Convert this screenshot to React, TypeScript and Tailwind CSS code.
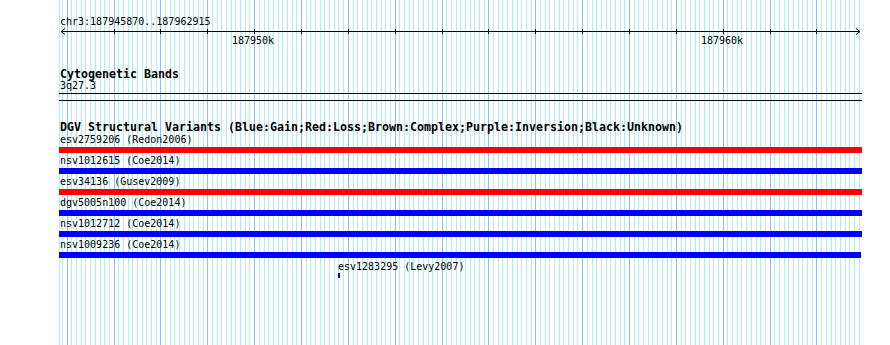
import React from 'react';

// grid: one minor line every 100 bp, a major one every 1 kb
const majorStart = 66.7;
const minorStep = 4.686;

const gridLines: { x: number; major: boolean }[] = [{ x: 59, major: false }];
for (let k = -1; majorStart + k * minorStep <= 860.5; k++) {
  gridLines.push({
    x: Math.round(majorStart + k * minorStep),
    major: ((k % 10) + 10) % 10 === 0,
  });
}

const ticks: number[] = [];
for (let k = 10; k <= 160; k += 10) ticks.push(Math.round(majorStart + k * minorStep));

type Variant = { label: string; color: string; width: string };

const variants: Variant[] = [
  { label: 'esv2759206 (Redon2006)', color: 'bg-[#ff0000]', width: 'w-[803px]' },
  { label: 'nsv1012615 (Coe2014)', color: 'bg-[#0000ff]', width: 'w-[803px]' },
  { label: 'esv34136 (Gusev2009)', color: 'bg-[#ff0000]', width: 'w-[803px]' },
  { label: 'dgv5005n100 (Coe2014)', color: 'bg-[#0000ff]', width: 'w-[803px]' },
  { label: 'nsv1012712 (Coe2014)', color: 'bg-[#0000ff]', width: 'w-[803px]' },
  { label: 'nsv1009236 (Coe2014)', color: 'bg-[#0000ff]', width: 'w-[802px]' },
];

const small = "font-['DejaVu_Sans_Mono',monospace] text-[10px] leading-[12px] text-black whitespace-pre";
const bold = "font-['DejaVu_Sans_Mono',monospace] font-bold text-[11.63px] leading-[11px] text-black whitespace-pre";

const Grid: React.FC = () => (
  <svg className="absolute inset-0" width={890} height={345} shapeRendering="crispEdges">
    {gridLines.map((l, i) => (
      <line
        key={i}
        x1={l.x + 0.5}
        x2={l.x + 0.5}
        y1={0}
        y2={345}
        stroke={l.major ? '#84c4f4' : '#aeeef2'}
        strokeWidth={1}
      />
    ))}
  </svg>
);

const Ruler: React.FC = () => (
  <div className="relative h-[18px] w-[890px]">
    <svg className="absolute inset-0" width={890} height={18} shapeRendering="crispEdges">
      <line x1={61} x2={860} y1={3.5} y2={3.5} stroke="#000" />
      <polyline points="65,0.5 61,3.5 65,6.5" fill="none" stroke="#000" shapeRendering="auto" />
      <polyline points="856,0.5 860,3.5 856,6.5" fill="none" stroke="#000" shapeRendering="auto" />
      {ticks.map((x) => (
        <line key={x} x1={x + 0.5} x2={x + 0.5} y1={1} y2={6} stroke="#000" />
      ))}
    </svg>
    <span className={`${small} absolute top-[7px] left-[232px]`}>187950k</span>
    <span className={`${small} absolute top-[7px] left-[701px]`}>187960k</span>
  </div>
);

export default function App() {
  return (
    <div className="relative w-[890px] h-[345px] bg-white overflow-hidden">
      <Grid />
      <div className="relative flex flex-col">
        <div className={`${small} pl-[60px] mt-[15px] leading-[13px]`}>chr3:187945870..187962915</div>
        <Ruler />

        <div className={`${bold} pl-[60px] mt-[23px]`}>Cytogenetic Bands</div>
        <div className={`${small} pl-[60px]`}>3q27.3</div>
        <div className="ml-[59px] mt-[1px] w-[803px] h-[8px] border-y border-black" />

        <div className={`${bold} pl-[60px] mt-[21px]`}>
          DGV Structural Variants (Blue:Gain;Red:Loss;Brown:Complex;Purple:Inversion;Black:Unknown)
        </div>

        <div className="flex flex-col gap-[2px] mt-[1px]">
          {variants.map((v) => (
            <div key={v.label} className="flex flex-col">
              <div className={`${small} pl-[60px]`}>{v.label}</div>
              <div className={`ml-[59px] mt-[1px] h-[6px] ${v.width} ${v.color}`} />
            </div>
          ))}
        </div>

        <div className="flex flex-col ml-[338px] mt-[3px]">
          <div className={small}>esv1283295 (Levy2007)</div>
          <div className="w-[2px] h-[5px] bg-[#0000ff]" />
        </div>
      </div>
    </div>
  );
}
